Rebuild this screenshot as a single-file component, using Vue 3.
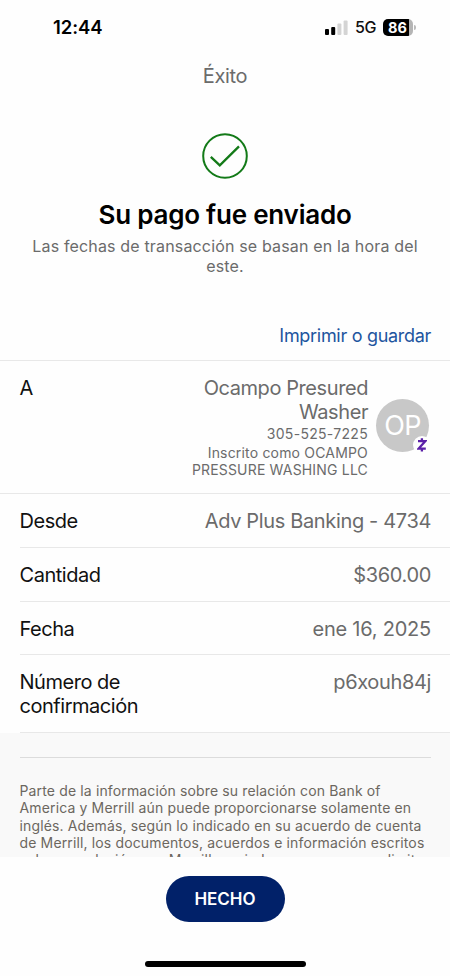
<script setup>
const bars = [
  { x: 0, h: 6, on: true },
  { x: 6.2, h: 8, on: true },
  { x: 12.4, h: 11.5, on: false },
  { x: 18.6, h: 14.5, on: false },
]
const rows = [
  { key: 'desde', label: 'Desde', value: 'Adv Plus Banking - 4734' },
  { key: 'cantidad', label: 'Cantidad', value: '$360.00' },
  { key: 'fecha', label: 'Fecha', value: 'ene 16, 2025' },
]
const legal = [
  'Parte de la información sobre su relación con Bank of',
  'America y Merrill aún puede proporcionarse solamente en',
  'inglés. Además, según lo indicado en su acuerdo de cuenta',
  'de Merrill, los documentos, acuerdos e información escritos',
  'sobre su relación con Merrill, enviados para su uso se limit',
]
</script>

<template>
  <div class="screen">
    <header class="status">
      <span class="time">12:44</span>
      <div class="indicators">
        <svg class="signal" width="23" height="15" viewBox="0 0 23 15">
          <rect v-for="b in bars" :key="b.x" :x="b.x" :y="15 - b.h" width="4" :height="b.h" rx="1" :fill="b.on ? '#000' : '#d4d4d4'" />
        </svg>
        <span class="network">5G</span>
        <div class="battery">
          <span class="cell">86</span>
          <span class="nub"></span>
        </div>
      </div>
    </header>

    <div class="title">Éxito</div>

    <section class="hero">
      <svg class="check" width="46" height="46" viewBox="0 0 46 46" fill="none" stroke="#137a18" stroke-width="2">
        <circle cx="23" cy="23" r="21.8" />
        <path d="M8.8 23.8 L17.8 32.4 L37 13.4" stroke-width="2.3" />
      </svg>
      <h1>Su pago fue enviado</h1>
      <p>Las fechas de transacción se basan en la hora del<br>este.</p>
    </section>

    <div class="action"><a>Imprimir o guardar</a></div>

    <section class="payee">
      <span class="label">A</span>
      <div class="who">
        <div class="name">Ocampo Presured<br>Washer</div>
        <div class="phone">305-525-7225</div>
        <div class="alias">Inscrito como OCAMPO<br>PRESSURE WASHING LLC</div>
      </div>
      <div class="avatar">
        <span>OP</span>
        <div class="badge">
          <svg width="10" height="16" viewBox="0 0 10 16" fill="none" stroke="#5b20a8" stroke-width="2.3">
            <path d="M1 4.2 H8.2 L1.7 11.6 H8.8 M4.9 1.3 V4 M4.9 11.7 V14.6" />
          </svg>
        </div>
      </div>
    </section>

    <section class="rows">
      <div v-for="r in rows" :key="r.key" class="row" :class="r.key">
        <span class="label">{{ r.label }}</span>
        <span class="value">{{ r.value }}</span>
      </div>
      <div class="row confirm">
        <span class="label">Número de<br>confirmación</span>
        <span class="value">p6xouh84j</span>
      </div>
    </section>

    <section class="legal">
      <div class="rule"></div>
      <p><span v-for="(l, i) in legal" :key="i" class="line">{{ l }}</span></p>
    </section>

    <footer class="footer">
      <button>HECHO</button>
      <div class="home"></div>
    </footer>
  </div>
</template>

<style>
body { margin: 0; background: #fff; }
</style>

<style scoped>
.screen {
  width: 450px;
  height: 976px;
  overflow: hidden;
  display: flex;
  flex-direction: column;
  background: #fefefe;
  color: #111;
  font-family: Inter, Roboto, sans-serif;
}
.screen > * { flex-shrink: 0; box-sizing: border-box; }
.status {
  height: 54px;
  padding: 0 34px 0 53px;
  display: flex;
  align-items: center;
  justify-content: space-between;
}
.time { font-size: 18.5px; font-weight: 600; letter-spacing: -0.1px; color: #000; }
.indicators { display: flex; align-items: center; }
.network { font-size: 16px; font-weight: 500; letter-spacing: -0.4px; margin: 0 7px; }
.battery { display: flex; align-items: center; gap: 1px; }
.cell {
  box-sizing: border-box;
  width: 30px;
  height: 17px;
  padding-right: 1px;
  border-radius: 5px;
  background: linear-gradient(90deg, #000 26px, #b5b5b5 26px);
  color: #fff;
  font-size: 14.5px;
  line-height: 17px;
  font-weight: 700;
  text-align: center;
}
.nub { width: 2px; height: 5px; border-radius: 0 2px 2px 0; background: #bbb; }
.title {
  height: 79px;
  padding-top: 10px;
  text-align: center;
  font-size: 20px;
  line-height: 24px;
  letter-spacing: -0.3px;
  color: #6b6b6b;
}
.hero { height: 190px; text-align: center; }
.check { display: block; margin: 0 auto; }
h1 {
  margin: 20px 0 0;
  font-size: 26px;
  line-height: 32px;
  font-weight: 600;
  letter-spacing: -0.22px;
  color: #000;
}
.hero p { margin: 5px 0 0; font-size: 16px; line-height: 20px; letter-spacing: 0.16px; color: #6b6b6b; }
.action {
  height: 38px;
  padding: 0 19px;
  text-align: right;
  font-size: 18px;
  line-height: 25px;
  letter-spacing: -0.3px;
  color: #1d559f;
  border-bottom: 1px solid #e8e8e8;
}
.payee {
  height: 133px;
  padding: 15px 21px 0 19.5px;
  display: flex;
  border-bottom: 1px solid #e8e8e8;
}
.label { font-size: 20px; line-height: 24px; letter-spacing: -0.47px; color: #111; }
.who { margin-left: auto; text-align: right; color: #6b6b6b; }
.name { font-size: 20px; line-height: 24px; letter-spacing: -0.42px; }
.phone { font-size: 14px; line-height: 19px; letter-spacing: 0.3px; }
.alias { font-size: 14px; line-height: 17px; letter-spacing: 0.18px; margin-top: 1px; }
.avatar {
  position: relative;
  width: 53px;
  height: 53px;
  margin: 23px 0 0 8px;
  border-radius: 50%;
  background: #c8c8c8;
  color: #fff;
  font-size: 27px;
  line-height: 54px;
  letter-spacing: -0.6px;
  text-align: center;
}
.badge {
  position: absolute;
  right: -2px;
  bottom: -2px;
  width: 18px;
  height: 18px;
  border-radius: 50%;
  background: #fefefe;
  display: flex;
  align-items: center;
  justify-content: center;
}
.rows { padding-left: 19.5px; }
.row {
  box-sizing: border-box;
  height: 54px;
  padding: 15px 19px 0 0;
  display: flex;
  justify-content: space-between;
  border-bottom: 1px solid #e8e8e8;
}
.value { font-size: 20px; line-height: 24px; letter-spacing: -0.35px; color: #6b6b6b; }
.fecha { height: 53px; }
.fecha .value { letter-spacing: -0.22px; }
.confirm { height: 78px; }
.legal {
  height: 124px;
  overflow: hidden;
  padding: 24px 19px 0 19.5px;
  background: #f9f9f9;
}
.rule { height: 1px; background: #dcdcdc; }
.legal p { margin: 24px 0 0; font-size: 14px; line-height: 17.3px; letter-spacing: 0.14px; color: #6c675f; }
.line { display: block; white-space: nowrap; }
.footer { padding-top: 19px; display: flex; flex-direction: column; align-items: center; }
button {
  width: 119px;
  height: 46px;
  padding: 0 0 1px;
  border: 0;
  border-radius: 23px;
  background: #012169;
  color: #fff;
  font: 600 17px Inter, sans-serif;
}
.home { width: 161px; height: 6px; margin-top: 39px; border-radius: 3px; background: #000; }
</style>
